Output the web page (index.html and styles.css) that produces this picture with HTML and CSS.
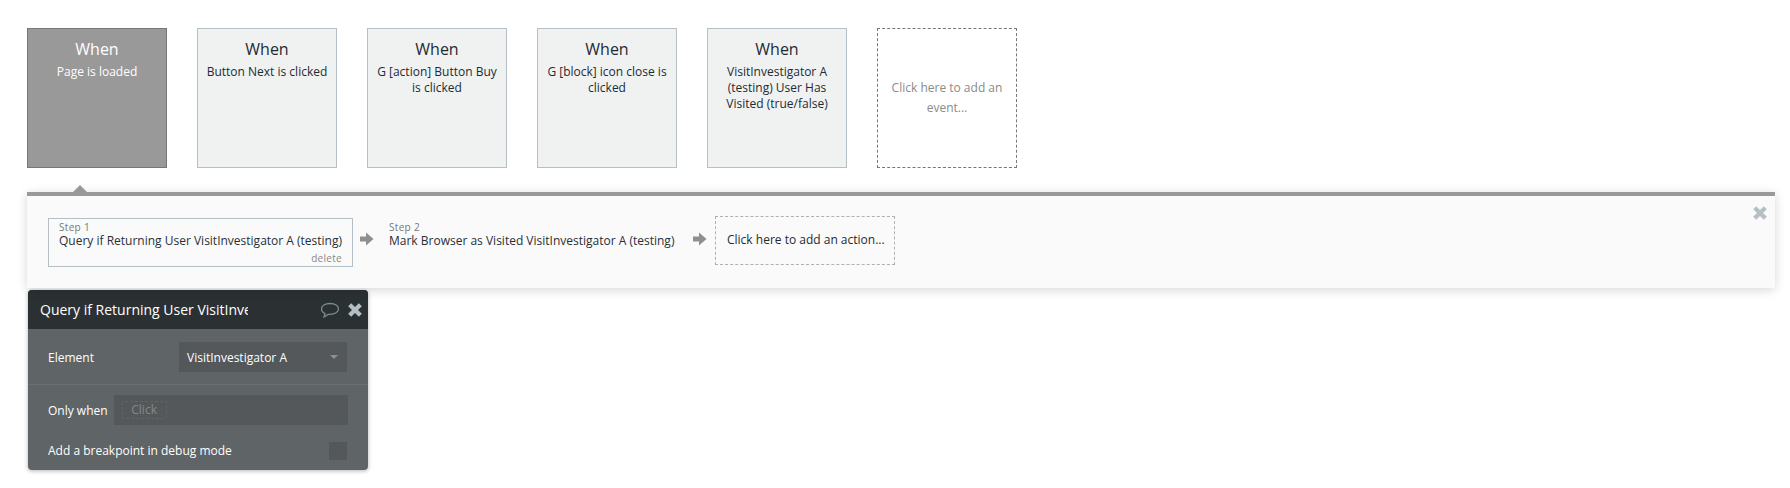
FILE: index.html
```html
<!DOCTYPE html>
<html lang="en">
<head>
<meta charset="utf-8">
<title>Workflow</title>
<link rel="stylesheet" href="styles.css">
</head>
<body>
<div class="events">
  <div class="event selected"><div class="when">When</div><div class="desc">Page is loaded</div></div>
  <div class="event"><div class="when">When</div><div class="desc">Button Next is clicked</div></div>
  <div class="event"><div class="when">When</div><div class="desc">G [action] Button Buy is clicked</div></div>
  <div class="event"><div class="when">When</div><div class="desc">G [block] icon close is clicked</div></div>
  <div class="event"><div class="when">When</div><div class="desc">VisitInvestigator A (testing) User Has Visited (true/false)</div></div>
  <div class="event add-event"><span>Click here to add an event...</span></div>
</div>

<div class="panel">
  <div class="pointer"></div>
  <svg class="panel-close" viewBox="0 0 12 12"><path d="M2 2 10 10M10 2 2 10"/></svg>
  <div class="step step-active">
    <div class="step-label">Step 1</div>
    <div class="step-name">Query if Returning User VisitInvestigator A (testing)</div>
    <div class="step-delete">delete</div>
  </div>
  <svg class="arrow" viewBox="0 0 14 14"><path d="M0 4.500H6V0.500L13.500 7 6 13.500V9.500H0Z"/></svg>
  <div class="step step-plain">
    <div class="step-label">Step 2</div>
    <div class="step-name">Mark Browser as Visited VisitInvestigator A (testing)</div>
  </div>
  <svg class="arrow arrow-second" viewBox="0 0 14 14"><path d="M0 4.500H6V0.500L13.500 7 6 13.500V9.500H0Z"/></svg>
  <div class="add-action">Click here to add an action...</div>
</div>

<div class="editor">
  <div class="editor-head">
    <div class="editor-title">Query if Returning User VisitInvestigator A (testing)</div>
    <svg class="comment" viewBox="0 0 20 16"><path d="M10 1.500C5 1.500 1.500 3.800 1.500 7C1.500 9 2.800 10.600 5 11.500L4 15L8.500 12.300C9 12.400 9.500 12.400 10 12.400C15 12.400 18.500 10 18.500 7C18.500 3.800 15 1.500 10 1.500Z"/></svg>
    <svg class="editor-close" viewBox="0 0 12 12"><path d="M2 2 10 10M10 2 2 10"/></svg>
  </div>
  <div class="row row-element">
    <div class="row-label">Element</div>
    <div class="select"><span>VisitInvestigator A</span><i class="caret"></i></div>
  </div>
  <div class="row row-when">
    <div class="row-label">Only when</div>
    <div class="input"><span class="click">Click</span></div>
  </div>
  <div class="row row-break">
    <div class="row-label">Add a breakpoint in debug mode</div>
    <div class="checkbox"></div>
  </div>
</div>
</body>
</html>
```
FILE: styles.css
```css
* { box-sizing: border-box; }
html, body { margin: 0; height: 100%; }
body {
  padding: 28px 15px 0 27px;
  background: #fff;
  font-family: "Open Sans", sans-serif;
  font-size: 12px;
  color: #1f2a33;
  overflow: hidden;
}
.events { display: flex; gap: 30px; }
.event {
  width: 140px;
  height: 140px;
  padding: 9px 8px 0;
  background: #f0f2f2;
  border: 1px solid #b4c0c6;
  text-align: center;
  line-height: 16px;
}
.when { font-size: 16px; line-height: 22px; margin-bottom: 4px; }
.selected { background: #999; border-color: #777; color: #fff; }
.add-event {
  display: flex;
  align-items: center;
  justify-content: center;
  padding: 0 12px;
  background: #fff;
  border: 1px dashed #777;
  color: #8a8a8a;
  line-height: 20px;
}
.panel {
  position: relative;
  display: flex;
  align-items: flex-start;
  height: 96px;
  margin-top: 24px;
  padding: 20px 0 0 21px;
  background: #fafafa;
  border-top: 4px solid #999;
  box-shadow: 0 2px 10px rgba(0, 0, 0, .16);
}
.pointer {
  position: absolute;
  left: 46px;
  top: -11px;
  width: 0;
  height: 0;
  border-left: 7px solid transparent;
  border-right: 7px solid transparent;
  border-bottom: 7px solid #999;
}
.panel-close {
  position: absolute;
  right: 7px;
  top: 9px;
  width: 16px;
  height: 16px;
  fill: none;
  stroke: #b4c0c6;
  stroke-width: 3.200;
}
.step {
  position: relative;
  height: 49px;
  margin-top: 2px;
  padding: 2px 0 0 10px;
  border: 1px solid transparent;
  line-height: 16px;
  white-space: nowrap;
  color: #2a2f36;
}
.step-active { width: 305px; border-color: #b4c0c6; }
.step-plain { width: 307px; padding-left: 9px; }
.step-label { font-size: 10px; line-height: 12px; color: #777; letter-spacing: .3px; }
.step-name { line-height: 16px; }
.step-delete {
  position: absolute;
  right: 10px;
  bottom: 2px;
  font-size: 10px;
  line-height: 12px;
  color: #888;
  letter-spacing: .3px;
}
.arrow { flex: none; width: 14px; height: 14px; margin: 16px 5px 0 7px; fill: #8f8f8f; }
.arrow-second { margin: 16px 8px 0 7px; }
.add-action {
  width: 180px;
  height: 49px;
  padding-left: 11px;
  border: 1px dashed #b0b0b0;
  line-height: 45px;
  white-space: nowrap;
}
.editor {
  width: 340px;
  height: 180px;
  margin: 2px 0 0 1px;
  background: #5f6467;
  border-radius: 4px;
  color: #fff;
  overflow: hidden;
  box-shadow: 0 1px 4px rgba(0, 0, 0, .3);
}
.editor-head {
  display: flex;
  align-items: center;
  height: 39px;
  padding-left: 12px;
  background: #2b3133;
}
.editor-title {
  width: 208px;
  overflow: hidden;
  white-space: nowrap;
  font-size: 14px;
}
.comment { width: 20px; height: 16px; margin-left: 72px; fill: none; stroke: #7d8a8d; stroke-width: 1.3; }
.editor-close { width: 16px; height: 16px; margin-left: 7px; fill: none; stroke: #b4c0c6; stroke-width: 3.200; }
.row { display: flex; align-items: center; padding-left: 20px; }
.row-element {
  justify-content: space-between;
  height: 56px;
  padding: 1px 21px 0 20px;
  border-bottom: 1px solid #6b7073;
}
.row-when { height: 49px; padding: 1px 20px 0; }
.row-break { justify-content: space-between; height: 33px; padding-right: 21px; }
.select {
  display: flex;
  align-items: center;
  justify-content: space-between;
  width: 168px;
  height: 30px;
  padding: 0 9px 0 8px;
  background: #54585b;
}
.caret {
  width: 0;
  height: 0;
  border-left: 4px solid transparent;
  border-right: 4px solid transparent;
  border-top: 4px solid #8a9094;
}
.input {
  display: flex;
  align-items: center;
  width: 234px;
  height: 30px;
  margin-left: 6px;
  padding-left: 8px;
  background: #54585b;
}
.click {
  width: 45px;
  height: 18px;
  border: 1px dashed #5f6467;
  border-radius: 3px;
  color: #83888b;
  text-align: center;
  line-height: 16px;
}
.checkbox { width: 18px; height: 18px; background: #54585b; }
```
